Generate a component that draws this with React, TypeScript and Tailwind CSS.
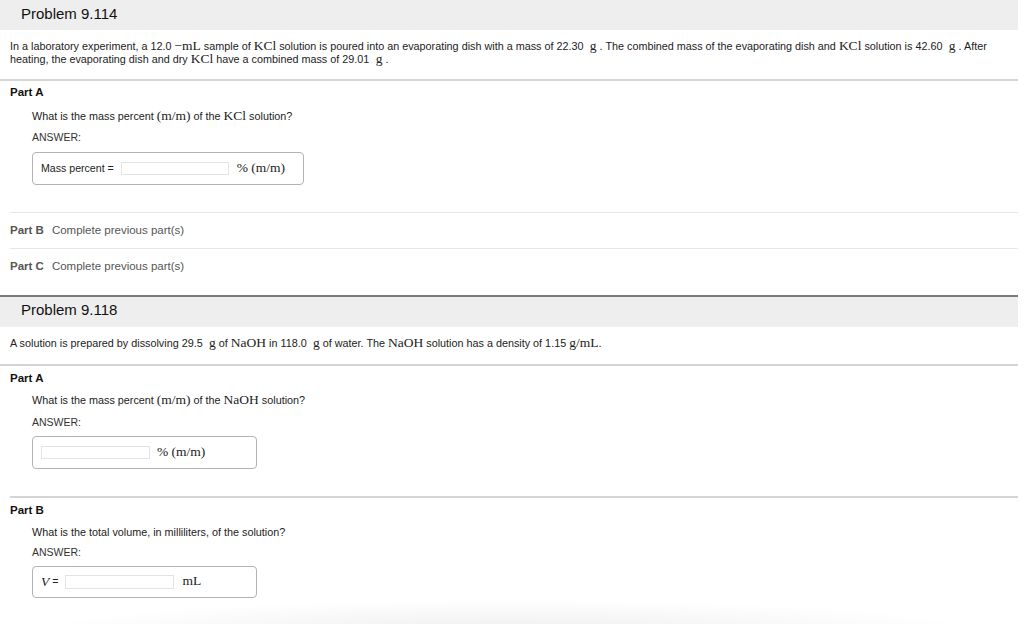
import React from "react";

const M = ({ children, italic = false }: { children: React.ReactNode; italic?: boolean }) => (
  <span className={`font-['Liberation_Serif','DejaVu_Serif',serif] text-[13.5px] leading-[8px] ${italic ? "italic" : ""}`}>{children}</span>
);

const Divider = ({ cls }: { cls: string }) => <div className={cls} />;

export default function App() {
  return (
    <div className="w-[1024px] h-[624px] overflow-hidden bg-white font-['Liberation_Sans',Arial,sans-serif] text-[#222]">
      <div className="w-[1018px]">
        {/* Problem 9.114 */}
        <div className="h-[30px] bg-[#eeeeee] pl-[21px] pb-[1px] flex items-center text-[15px] text-[#111]">Problem 9.114</div>
        <p className="px-[10px] pt-[10px] text-[10.8px] leading-[13px] text-[#222]">
          In a laboratory experiment, a 12.0 <M>−mL</M> sample of <M>KCl</M> solution is poured into an evaporating dish with a mass of 22.30 <M>&nbsp;g</M> . The combined mass of the evaporating dish and <M>KCl</M> solution is 42.60 <M>&nbsp;g</M> . After heating, the evaporating dish and dry <M>KCl</M> have a combined mass of 29.01 <M>&nbsp;g</M> .
        </p>
        <Divider cls="mt-[13px] h-[2px] bg-[#d4d4d4]" />

        {/* Part A */}
        <div className="pl-[10px] pt-[5px] text-[11.5px] leading-[13px] font-bold text-[#111]">Part A</div>
        <div className="pl-[32px]">
          <div className="mt-[11px] text-[10.8px] leading-[13px]">
            What is the mass percent <M>(m/m)</M> of the <M>KCl</M> solution?
          </div>
          <div className="mt-[8px] text-[10.5px] leading-[13px] text-[#333]">ANSWER:</div>
          <div className="mt-[8px] w-[272px] h-[33px] border border-[#b3b3b3] rounded-[4px] flex items-center pl-[8px] text-[10.6px]">
            <span>Mass percent =</span>
            <div className="ml-[7px] w-[108px] h-[13px] border border-[#e3e3e3]" />
            <span className="ml-[8px]"><M>%&nbsp;(m/m)</M></span>
          </div>
        </div>

        <Divider cls="mt-[27px] ml-[10px] h-px bg-[#e6e6e6]" />
        <div className="pl-[10px] h-[35px] pt-[1px] flex items-center text-[11.5px] text-[#555]">
          <span className="font-bold">Part B</span>
          <span className="ml-[8px]">Complete previous part(s)</span>
        </div>
        <Divider cls="ml-[10px] h-px bg-[#e6e6e6]" />
        <div className="pl-[10px] h-[36px] flex items-center text-[11.5px] text-[#555]">
          <span className="font-bold">Part C</span>
          <span className="ml-[8px]">Complete previous part(s)</span>
        </div>

        {/* Problem 9.118 */}
        <div className="mt-[10px] border-t-2 border-[#7a7a7a] h-[32px] bg-[#eeeeee] pl-[21px] pb-[3px] flex items-center text-[15px] text-[#111]">Problem 9.118</div>
        <p className="px-[10px] pt-[10px] text-[10.8px] leading-[13px]">
          A solution is prepared by dissolving 29.5 <M>&nbsp;g</M> of <M>NaOH</M> in 118.0 <M>&nbsp;g</M> of water. The <M>NaOH</M> solution has a density of 1.15 <M>g/mL</M>.
        </p>
        <Divider cls="mt-[14px] h-[2px] bg-[#d4d4d4]" />

        <div className="pl-[10px] pt-[6px] text-[11.5px] leading-[13px] font-bold text-[#111]">Part A</div>
        <div className="pl-[32px]">
          <div className="mt-[9px] text-[10.8px] leading-[13px]">
            What is the mass percent <M>(m/m)</M> of the <M>NaOH</M> solution?
          </div>
          <div className="mt-[9px] text-[10.5px] leading-[13px] text-[#333]">ANSWER:</div>
          <div className="mt-[7px] w-[225px] h-[33px] border border-[#b3b3b3] rounded-[4px] flex items-center pl-[8px] text-[10.6px]">
            <div className="w-[109px] h-[13px] border border-[#e3e3e3]" />
            <span className="ml-[7px]"><M>%&nbsp;(m/m)</M></span>
          </div>
        </div>

        <Divider cls="mt-[27px] ml-[10px] h-[2px] bg-[#d4d4d4]" />
        <div className="pl-[10px] pt-[6px] text-[11.5px] leading-[13px] font-bold text-[#111]">Part B</div>
        <div className="pl-[32px]">
          <div className="mt-[9px] text-[10.8px] leading-[13px]">What is the total volume, in milliliters, of the solution?</div>
          <div className="mt-[7px] text-[10.5px] leading-[13px] text-[#333]">ANSWER:</div>
          <div className="mt-[7px] w-[225px] h-[32px] border border-[#b3b3b3] rounded-[4px] flex items-center pl-[8px] text-[10.6px]">
            <M italic>V</M>
            <span className="ml-[3px]">=</span>
            <div className="ml-[7px] w-[109px] h-[14px] border border-[#e3e3e3]" />
            <span className="ml-[8px]"><M>mL</M></span>
          </div>
        </div>
      </div>
      <div className="mt-[2px] ml-[40px] w-[940px] h-[30px] bg-[radial-gradient(ellipse_50%_100%_at_50%_100%,#efefef,#ffffff)]" />
    </div>
  );
}
